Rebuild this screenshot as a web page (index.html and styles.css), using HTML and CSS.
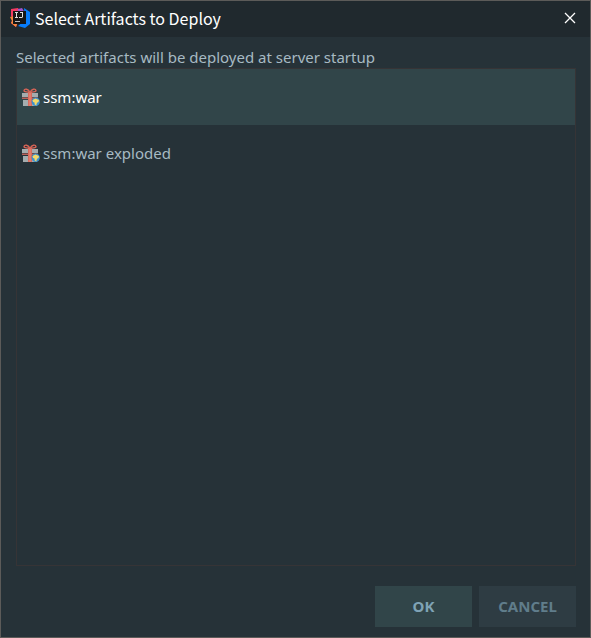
FILE: index.html
```html
<!DOCTYPE html>
<html lang="en">
<head>
<meta charset="utf-8">
<title>Select Artifacts to Deploy</title>
<link rel="stylesheet" href="styles.css">
</head>
<body>
<svg class="defs" aria-hidden="true">
  <symbol id="artifact" viewBox="0 0 18 18">
    <path d="M8 4.500C6.500 .500 2.500 .500 2 2.500C1.800 4 5 4 8 4.500C11 4 14.200 4 14 2.500C13.500 .500 9.500 .500 8 4.500Z" fill="none" stroke="#d96557" stroke-width="1.300"/>
    <path d="M0 5h6v4H0zM10 5h6v4h-6zM1 12h5v6H1zM10 12h5v6h-5z" fill="#a4acae"/>
    <path d="M0 9.500h16v1.500H0z" fill="#b96159"/>
    <path d="M6 4h4v14H6z" fill="#d96b5d"/>
    <path d="M7.500 5h1v13h-1z" fill="#f08a79"/>
    <circle cx="13.700" cy="13.800" r="4.200" fill="#3d91cd"/>
    <path d="M10.500 12l3-1.500 3.500 1.500-.5 2-1.500.8-.8 2.700-1.500-1-.2-2-1.500-.5z" fill="#f4d969"/>
  </symbol>
</svg>
<main class="dialog">
  <header class="titlebar">
    <svg class="logo" viewBox="0 0 20 20" aria-hidden="true">
      <path d="M1 1l7-1 3 6-5 13-5-4 2-4-2-3z" fill="#f43b62"/>
      <path d="M0 9l4-1 3 8-1 3-5-4 1-2z" fill="#f5863a"/>
      <path d="M8 1l4-1 3 5-8 4z" fill="#9e55ce"/>
      <path d="M14 0l6 4v12l-5 4-7-2 7-6z" fill="#087cfa"/>
      <path d="M3 3h13v13H3z" fill="#161616"/>
      <path d="M5 4h3v1H5zM6 5h1v4H6zM5 9h3v1H5zM10 4h3v5l-1 1H9V9h3V5h-2z" fill="#e0e0e0"/>
      <path d="M5 13h5v1H5z" fill="#bbb"/>
    </svg>
    <h1 class="title">Select Artifacts to Deploy</h1>
    <button class="close" type="button" aria-label="Close">
      <svg viewBox="0 0 10 10" aria-hidden="true"><path d="M0 0l10 10M10 0L0 10" stroke="#fff" stroke-width="1.300"/></svg>
    </button>
  </header>
  <section class="content">
    <p class="caption" id="caption">Selected artifacts will be deployed at server startup</p>
    <ul class="list" role="listbox" aria-labelledby="caption" tabindex="0">
      <li class="item selected" role="option" aria-selected="true"><svg class="icon" aria-hidden="true"><use href="#artifact"/></svg><span>ssm:war</span></li>
      <li class="item" role="option" aria-selected="false"><svg class="icon" aria-hidden="true"><use href="#artifact"/></svg><span>ssm:war exploded</span></li>
    </ul>
  </section>
  <footer class="actions">
    <button class="action primary" type="button">OK</button>
    <button class="action" type="button">CANCEL</button>
  </footer>
</main>
</body>
</html>
```
FILE: styles.css
```css
* { box-sizing: border-box; }
body {
  margin: 0;
  background: #263238;
  color: #a7bac3;
  font: 15px/20px "Noto Sans", sans-serif;
}
button { border: 0; font: inherit; }
.defs { position: absolute; width: 0; height: 0; }
.dialog {
  min-height: 100vh;
  display: flex;
  flex-direction: column;
  border: 1px solid #5c5b59;
}
.titlebar {
  display: flex;
  align-items: center;
  height: 36px;
  padding: 0 8px 2px 9px;
  background: #20292e;
}
.logo { width: 20px; height: 20px; }
.title {
  flex: 1;
  margin: 0 0 0 5px;
  color: #fff;
  font: 16px/20px "Noto Sans CJK SC", sans-serif;
}
.close {
  display: grid;
  place-items: center;
  width: 24px;
  height: 24px;
  padding: 0;
  background: none;
}
.close svg { width: 10px; height: 10px; overflow: visible; }
.content {
  flex: 1;
  display: flex;
  flex-direction: column;
  padding: 10px 14px 0 15px;
}
.caption { margin: 0 0 1px; }
.list {
  flex: 1;
  margin: 0;
  padding: 0;
  border: 1px solid #363436;
  list-style: none;
  outline: 0;
}
.item {
  display: flex;
  align-items: center;
  gap: 3px;
  height: 56px;
  padding-left: 5px;
}
.selected { background: #314549; color: #fff; }
.icon { width: 18px; height: 18px; }
.actions {
  display: flex;
  justify-content: flex-end;
  gap: 7px;
  padding: 20px 14px 10px;
}
.action {
  width: 97px;
  height: 41px;
  padding: 0 0 2px;
  background: #2e3c43;
  color: #607d8b;
  font-weight: 700;
}
.primary { background: #314549; color: #7fa3b5; }
```
